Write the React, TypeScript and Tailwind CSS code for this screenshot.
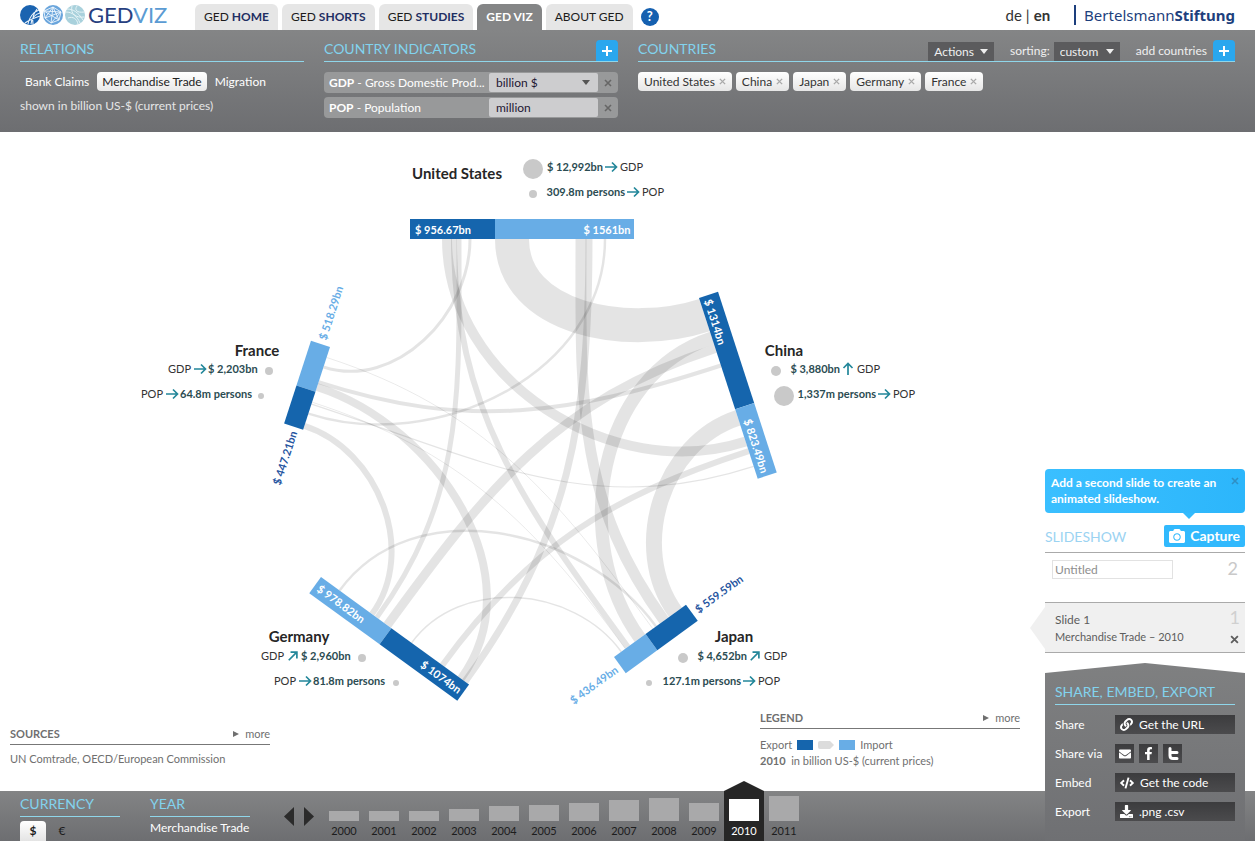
import React from "react";
import { FaCamera, FaLink, FaEnvelope, FaFacebookF, FaCode, FaDownload } from "react-icons/fa";

type Point = [number, number];

type Bar = {
  start: Point;
  angle: number;
  inward: 1 | -1;
  length: number;
  split: number;
  exportFirst: boolean;
};

const EXPORT_COLOR = "#1565ad";
const IMPORT_COLOR = "#68ade6";
const BAR_DEPTH = 20;

const bars: Record<string, Bar> = {
  us: { start: [410, 239], angle: 0, inward: 1, length: 224, split: 85, exportFirst: true },
  china: { start: [699, 298], angle: 72, inward: 1, length: 190, split: 117, exportFirst: true },
  japan: { start: [614, 657], angle: -36, inward: -1, length: 89, split: 39, exportFirst: false },
  germany: { start: [321, 577], angle: 36, inward: -1, length: 183, split: 87, exportFirst: false },
  france: { start: [330, 347], angle: 108, inward: -1, length: 87, split: 47, exportFirst: false },
};

type Flow = { from: string; at: number; to: string; end: number; width: number };

const flows: Flow[] = [
  { from: "china", at: 18, to: "us", end: 102, width: 34 },
  { from: "china", at: 42, to: "japan", end: 32, width: 13 },
  { from: "china", at: 53, to: "germany", end: 82, width: 9 },
  { from: "china", at: 71, to: "france", end: 37, width: 4 },
  { from: "us", at: 37, to: "china", end: 151, width: 10 },
  { from: "us", at: 44, to: "japan", end: 17, width: 6 },
  { from: "us", at: 49, to: "germany", end: 69, width: 5 },
  { from: "us", at: 60, to: "france", end: 21, width: 3 },
  { from: "japan", at: 76, to: "china", end: 126, width: 16 },
  { from: "japan", at: 62, to: "us", end: 171, width: 11 },
  { from: "japan", at: 52, to: "germany", end: 23, width: 2.5 },
  { from: "japan", at: 48, to: "france", end: 11, width: 0.8 },
  { from: "germany", at: 173, to: "france", end: 42, width: 8 },
  { from: "germany", at: 178, to: "us", end: 179, width: 7 },
  { from: "germany", at: 150, to: "china", end: 161, width: 6 },
  { from: "germany", at: 112, to: "japan", end: 9, width: 1.5 },
  { from: "france", at: 83, to: "germany", end: 63, width: 6 },
  { from: "france", at: 70, to: "us", end: 195, width: 2.5 },
  { from: "france", at: 60, to: "china", end: 177, width: 1.2 },
  { from: "france", at: 58, to: "japan", end: 14, width: 0.8 },
];

function anchor(bar: Bar, offset: number) {
  const a = (bar.angle * Math.PI) / 180;
  const point: Point = [bar.start[0] + Math.cos(a) * offset, bar.start[1] + Math.sin(a) * offset];
  const normal: Point = [-Math.sin(a) * bar.inward, Math.cos(a) * bar.inward];
  return { point, normal };
}

function flowPath(flow: Flow) {
  const p = anchor(bars[flow.from], flow.at);
  const q = anchor(bars[flow.to], flow.end);
  const k = 0.39 * Math.hypot(p.point[0] - q.point[0], p.point[1] - q.point[1]);
  const c1 = [p.point[0] + p.normal[0] * k, p.point[1] + p.normal[1] * k];
  const c2 = [q.point[0] + q.normal[0] * k, q.point[1] + q.normal[1] * k];
  return `M${p.point.join(" ")} C${c1.join(" ")} ${c2.join(" ")} ${q.point.join(" ")}`;
}

function BarShape({ bar }: { bar: Bar }) {
  const y = bar.inward === 1 ? -BAR_DEPTH : 0;
  const first = bar.exportFirst ? EXPORT_COLOR : IMPORT_COLOR;
  const second = bar.exportFirst ? IMPORT_COLOR : EXPORT_COLOR;
  return (
    <g transform={`translate(${bar.start[0]} ${bar.start[1]}) rotate(${bar.angle})`}>
      <rect x={0} y={y} width={bar.split} height={BAR_DEPTH} fill={first} />
      <rect x={bar.split} y={y} width={bar.length - bar.split} height={BAR_DEPTH} fill={second} />
    </g>
  );
}

const amounts = [
  { text: "$ 956.67bn", x: 443, y: 230, angle: 0, fill: "#ffffff" },
  { text: "$ 1561bn", x: 607, y: 230, angle: 0, fill: "#ffffff" },
  { text: "$ 1314bn", x: 715, y: 322, angle: 72, fill: "#ffffff" },
  { text: "$ 823.49bn", x: 756, y: 446, angle: 72, fill: "#ffffff" },
  { text: "$ 559.59bn", x: 719, y: 594, angle: -36, fill: "#2554a0" },
  { text: "$ 436.49bn", x: 594, y: 685, angle: -36, fill: IMPORT_COLOR },
  { text: "$ 978.82bn", x: 341, y: 604, angle: 36, fill: "#ffffff" },
  { text: "$ 1074bn", x: 441, y: 677, angle: 36, fill: "#ffffff" },
  { text: "$ 518.29bn", x: 331, y: 313, angle: -72, fill: IMPORT_COLOR },
  { text: "$ 447.21bn", x: 285, y: 458, angle: -72, fill: "#2554a0" },
];

const names = [
  { text: "United States", x: 457, y: 179 },
  { text: "China", x: 784, y: 356 },
  { text: "Japan", x: 734, y: 642 },
  { text: "Germany", x: 299, y: 642 },
  { text: "France", x: 257, y: 356 },
];

type Indicator = {
  value: string;
  label: string;
  arrowX: number;
  y: number;
  turn: number;
  dotX: number;
  r: number;
  mirrored?: boolean;
};

const indicators: Indicator[] = [
  { value: "$ 12,992bn", label: "GDP", arrowX: 611, y: 167, turn: 0, dotX: 533, r: 10 },
  { value: "309.8m persons", label: "POP", arrowX: 633, y: 192, turn: 0, dotX: 533, r: 4 },
  { value: "$ 3,880bn", label: "GDP", arrowX: 848, y: 369, turn: -90, dotX: 776, r: 5 },
  { value: "1,337m persons", label: "POP", arrowX: 884, y: 394, turn: 0, dotX: 784, r: 10 },
  { value: "$ 4,652bn", label: "GDP", arrowX: 755, y: 656, turn: -45, dotX: 683, r: 5 },
  { value: "127.1m persons", label: "POP", arrowX: 749, y: 681, turn: 0, dotX: 649, r: 3 },
  { value: "$ 2,960bn", label: "GDP", arrowX: 293, y: 656, turn: -45, dotX: 362, r: 4, mirrored: true },
  { value: "81.8m persons", label: "POP", arrowX: 305, y: 681, turn: 0, dotX: 396, r: 3, mirrored: true },
  { value: "$ 2,203bn", label: "GDP", arrowX: 200, y: 369, turn: 0, dotX: 269, r: 4, mirrored: true },
  { value: "64.8m persons", label: "POP", arrowX: 172, y: 394, turn: 0, dotX: 261, r: 3, mirrored: true },
];

function IndicatorMark({ item }: { item: Indicator }) {
  const side = item.mirrored ? 1 : -1;
  return (
    <g fontSize={11}>
      <circle cx={item.dotX} cy={item.y + 2} r={item.r} fill="#c9c9c9" />
      <text
        x={item.arrowX + side * 8}
        y={item.y + 4}
        textAnchor={item.mirrored ? "start" : "end"}
        fontWeight={700}
        fill="#2b4c52"
      >
        {item.value}
      </text>
      <path
        d="M-6 0H5M1 -4.500L5.500 0L1 4.500"
        transform={`translate(${item.arrowX} ${item.y}) rotate(${item.turn})`}
        fill="none"
        stroke="#23879a"
        strokeWidth={1.7}
      />
      <text
        x={item.arrowX - side * 9}
        y={item.y + 4}
        textAnchor={item.mirrored ? "end" : "start"}
        fill="#333333"
      >
        {item.label}
      </text>
    </g>
  );
}

function TradeChart() {
  return (
    <svg viewBox="0 132 1030 574" className="block h-[574px] w-full" role="img" aria-label="Merchandise Trade 2010">
      <g fill="none" stroke="#000000" strokeOpacity={0.105}>
        {flows.map((f) => (
          <path key={f.from + f.to} d={flowPath(f)} strokeWidth={f.width} />
        ))}
      </g>
      {Object.entries(bars).map(([key, bar]) => (
        <BarShape key={key} bar={bar} />
      ))}
      <g fontSize={11} fontWeight={700} textAnchor="middle">
        {amounts.map((a) => (
          <text key={a.text} transform={`translate(${a.x} ${a.y}) rotate(${a.angle})`} y={4} fill={a.fill}>
            {a.text}
          </text>
        ))}
      </g>
      <g fontSize={15} fontWeight={700} textAnchor="middle" fill="#262626">
        {names.map((n) => (
          <text key={n.text} x={n.x} y={n.y}>
            {n.text}
          </text>
        ))}
      </g>
      {indicators.map((item) => (
        <IndicatorMark key={item.value} item={item} />
      ))}
    </svg>
  );
}

function Logo() {
  return (
    <a href="#" className="flex h-[30px] w-[175px] items-center gap-0.5" aria-label="GED VIZ">
      <svg width="66" height="22" viewBox="0 0 66 22" aria-hidden="true">
        <circle cx="10" cy="11" r="10" fill="#1a63b0" />
        <path d="M8 20C9 14 13 8 19 6M11 20C11 15 15 10 20 9M5 19C9 16 14 14 20 12M13 20C12 15 14 9 17 5" fill="none" stroke="#e8f2fb" strokeWidth="1.100" />
        <circle cx="33" cy="11" r="10" fill="#6aa5dc" />
        <path d="M24 7L33 3L41 8L39 16L31 19L25 14ZM24 7L39 16M33 3L31 19M41 8L25 14M33 3L25 14M41 8L31 19M24 7L41 8M33 3L39 16" fill="none" stroke="#eef6fd" strokeWidth="0.9" />
        <circle cx="55" cy="11" r="10" fill="#a9d1dc" />
        <path d="M47 5C53 5 58 8 63 16M46 8C52 8 57 12 60 19M52 2C50 10 56 14 64 13M48 14C53 12 57 15 58 20M57 2C54 6 57 9 64 8" fill="none" stroke="#e6f4f7" strokeWidth="1" />
      </svg>
      <span className="text-[22px] leading-7 text-[#27407f]">
        GED<span className="text-[#5b9bd3]">VIZ</span>
      </span>
    </a>
  );
}

const tabs = [
  { lead: "GED", strong: "HOME" },
  { lead: "GED", strong: "SHORTS" },
  { lead: "GED", strong: "STUDIES" },
  { lead: "GED VIZ", active: true },
  { lead: "ABOUT GED" },
];

function TopBar() {
  return (
    <header className="flex h-[30px] items-end bg-white pr-5 pl-5">
      <Logo />
      <nav className="flex gap-1">
        {tabs.map((t) => (
          <a
            key={t.lead + (t.strong ?? "")}
            href="#"
            className={
              t.active
                ? "flex h-[26px] items-center gap-[3px] rounded-t-md bg-[#848586] px-[9px] text-xs font-bold text-white"
                : "flex h-[26px] items-center gap-[3px] rounded-t-md bg-[#e6e6e6] px-[9px] text-xs text-[#1c1c1c]"
            }
          >
            {t.lead}
            {t.strong && <b className="text-[#1f2f63]">{t.strong}</b>}
          </a>
        ))}
      </nav>
      <button
        type="button"
        aria-label="Help"
        className="mb-1 ml-2 flex size-[18px] items-center justify-center rounded-full bg-[#1560b0] text-[13px] font-bold text-white"
      >
        ?
      </button>
      <div className="ml-auto flex h-[30px] items-center text-[15px] text-[#333]">
        <a href="#">de</a>
        <span className="px-1">|</span>
        <a href="#" className="font-bold">en</a>
        <a href="#" className="ml-6 border-l-2 border-[#1d3f7d] pl-2 font-['Noto_Sans',sans-serif] text-[15px] leading-5 text-[#1d3f7d]">
          Bertelsmann<b>Stiftung</b>
        </a>
      </div>
    </header>
  );
}

const headingClass = "text-sm leading-6 text-[#82d3ee] whitespace-nowrap";

function AddButton({ label }: { label: string }) {
  return (
    <button
      type="button"
      aria-label={label}
      className="flex h-[21px] w-[22px] items-center justify-center rounded-t-sm bg-[#2aa7ee] text-white"
    >
      <svg width="12" height="12" viewBox="0 0 12 12" aria-hidden="true">
        <path d="M6 1V11M1 6H11" stroke="currentColor" strokeWidth="2" />
      </svg>
    </button>
  );
}

function Cross({ size }: { size: number }) {
  return (
    <svg width={size} height={size} viewBox="0 0 8 8" aria-hidden="true">
      <path d="M1 1L7 7M7 1L1 7" stroke="currentColor" strokeWidth="1.600" />
    </svg>
  );
}

function Caret() {
  return (
    <svg width="8" height="5" viewBox="0 0 8 5" className="pointer-events-none" aria-hidden="true">
      <path d="M0 0H8L4 5Z" fill="currentColor" />
    </svg>
  );
}

const countryTags = ["United States", "China", "Japan", "Germany", "France"];

function ControlPanel() {
  return (
    <section className="grid min-h-[102px] grid-cols-[284px_294px_minmax(0,1fr)] gap-x-5 bg-linear-to-b from-[#848586] to-[#6d6e71] px-5 pt-2">
      <div>
        <div className="flex h-6 items-end border-b border-[#8fd6ea]">
          <h2 className={headingClass}>RELATIONS</h2>
        </div>
        <div className="mt-2.5 flex text-xs leading-[19px] text-white">
          <button type="button" className="px-[5px]">Bank Claims</button>
          <button type="button" className="mx-[3px] rounded-sm bg-linear-to-b from-white to-[#e9e9e9] px-[5px] text-[#222]">
            Merchandise Trade
          </button>
          <button type="button" className="px-[5px]">Migration</button>
        </div>
        <p className="mt-[5px] text-xs leading-5 text-[#e6e6e6]">shown in billion US-$ (current prices)</p>
      </div>

      <div>
        <div className="flex h-6 items-end justify-between border-b border-[#8fd6ea]">
          <h2 className={headingClass}>COUNTRY INDICATORS</h2>
          <AddButton label="Add indicator" />
        </div>
        <div className="mt-2.5 flex h-[21px] items-center rounded-sm bg-[#98999a] pl-[5px] text-xs whitespace-nowrap text-white">
          <label htmlFor="gdp-unit" className="flex-1">
            <b>GDP</b> - Gross Domestic Prod...
          </label>
          <span className="relative flex h-[19px] w-[109px] items-center">
            <select id="gdp-unit" className="h-[19px] w-full appearance-none rounded-xs bg-[#cdcdcf] px-[7px] text-xs leading-[19px] text-[#1d1733]">
              <option>billion $</option>
            </select>
            <span className="pointer-events-none absolute right-2 text-[#555]">
              <Caret />
            </span>
          </span>
          <button type="button" aria-label="Remove GDP" className="flex w-5 justify-center text-[#666]">
            <Cross size={8} />
          </button>
        </div>
        <div className="mt-1 flex h-[21px] items-center rounded-sm bg-[#98999a] pl-[5px] text-xs whitespace-nowrap text-white">
          <label htmlFor="pop-unit" className="flex-1">
            <b>POP</b> - Population
          </label>
          <input id="pop-unit" readOnly value="million" className="h-[19px] w-[109px] rounded-xs bg-[#cdcdcf] px-[7px] text-xs text-[#1d1733]" />
          <button type="button" aria-label="Remove POP" className="flex w-5 justify-center text-[#666]">
            <Cross size={8} />
          </button>
        </div>
      </div>

      <div>
        <div className="flex h-6 items-end border-b border-[#8fd6ea] text-xs text-[#efefef]">
          <h2 className={headingClass}>COUNTRIES</h2>
          <button type="button" className="ml-auto flex h-[19px] items-center gap-1.5 bg-[#5b5b5d] px-1.5">
            Actions <Caret />
          </button>
          <label htmlFor="sorting" className="ml-4 leading-5">sorting:</label>
          <span className="relative ml-1 flex h-[19px] w-[66px] items-center bg-[#5b5b5d]">
            <select id="sorting" className="h-[19px] w-full appearance-none px-1.5 text-xs leading-[19px]">
              <option>custom</option>
            </select>
            <span className="pointer-events-none absolute right-1.5">
              <Caret />
            </span>
          </span>
          <span className="mr-1.5 ml-4 leading-5">add countries</span>
          <AddButton label="Add countries" />
        </div>
        <ul className="mt-2.5 flex gap-1 text-xs leading-[19px] text-[#333]">
          {countryTags.map((c) => (
            <li key={c} className="flex items-center gap-1 rounded-sm bg-linear-to-b from-white to-[#e6e6e6] px-1.5">
              {c}
              <button type="button" aria-label={`Remove ${c}`} className="text-[#aaa]">
                <Cross size={7} />
              </button>
            </li>
          ))}
        </ul>
      </div>
    </section>
  );
}

function MoreLink() {
  return (
    <a href="#" className="flex items-center gap-1.5 text-[11px]">
      <svg width="6" height="6" viewBox="0 0 6 6" aria-hidden="true">
        <path d="M0 0L6 3L0 6Z" fill="currentColor" />
      </svg>
      more
    </a>
  );
}

function Notes() {
  return (
    <div className="flex items-start justify-between px-2.5 text-[11px] text-[#6f6f6f]">
      <section className="w-[260px] pt-4">
        <div className="flex items-center justify-between border-b border-[#777] leading-5">
          <h3 className="text-[11px] font-bold">SOURCES</h3>
          <MoreLink />
        </div>
        <p className="mt-1 leading-5">UN Comtrade, OECD/European Commission</p>
      </section>
      <section className="w-[260px] pb-[22px]">
        <div className="flex items-center justify-between border-b border-[#777] leading-5">
          <h3 className="text-[11px] font-bold">LEGEND</h3>
          <MoreLink />
        </div>
        <div className="mt-2 flex items-center gap-[5px] leading-4">
          Export
          <span className="h-2.5 w-4 bg-[#1565ad]" />
          <svg width="16" height="8" viewBox="0 0 16 8" aria-hidden="true">
            <path d="M0 2Q0 0 2 0H12L16 4L12 8H2Q0 8 0 6Z" fill="#dcdcdc" />
          </svg>
          <span className="h-2.5 w-4 bg-[#68ade6]" />
          Import
        </div>
        <p className="leading-4">
          <b>2010</b>&nbsp; in billion US-$ (current prices)
        </p>
      </section>
    </div>
  );
}

function TwitterT() {
  return (
    <svg width="12" height="14" viewBox="0 0 12 14" aria-hidden="true">
      <path d="M3 1.500V8.500Q3 11.500 6 11.500H10M3 5.500H10" fill="none" stroke="currentColor" strokeWidth="3" strokeLinecap="round" />
    </svg>
  );
}

const darkButton = "flex h-[19px] w-full items-center gap-1.5 bg-linear-to-b from-[#3c3c3e] to-[#4b4b4d] px-[5px] text-xs text-white";
const squareButton = "flex h-[19px] w-[19px] items-center justify-center bg-linear-to-b from-[#3c3c3e] to-[#4b4b4d] text-white";

function Sidebar() {
  return (
    <aside className="z-10 col-start-2 row-span-2 row-start-1 flex flex-col self-end pr-2.5 pl-[15px]">
      <div className="relative flex h-11 items-start justify-between rounded-sm bg-linear-to-r from-[#3abfff] to-[#2cb6fb] px-1.5 pt-1.5 text-xs leading-4 text-white">
        <p className="font-bold whitespace-nowrap">
          Add a second slide to create an
          <br />
          animated slideshow.
        </p>
        <button type="button" aria-label="Dismiss hint" className="mt-0.5 text-[#2f8fc4]">
          <Cross size={8} />
        </button>
        <svg className="absolute top-11 right-[50px]" width="12" height="6" viewBox="0 0 12 6" aria-hidden="true">
          <path d="M0 0H12L6 6Z" fill="#33bbfd" />
        </svg>
      </div>
      <div className="mt-3 flex h-7 items-start justify-between border-b border-[#aaa]">
        <h2 className="text-sm leading-6 text-[#9bd3f2]">SLIDESHOW</h2>
        <button type="button" className="flex h-[22px] items-center gap-[5px] rounded-xs bg-[#31b9fd] px-[5px] text-sm font-bold text-white">
          <FaCamera size={16} />
          Capture
        </button>
      </div>
      <div className="flex h-[49px] items-start justify-between px-[7px] pt-[7px]">
        <input
          aria-label="Slide title"
          placeholder="Untitled"
          className="h-[19px] w-[121px] border border-[#e2e2e2] px-0.5 text-xs placeholder:text-[#8e8e8e]"
        />
        <span className="text-lg leading-4 text-[#c9c9c9]">2</span>
      </div>
      <div className="relative flex h-[51px] justify-between border-y border-[#aaa] bg-[#f0f0f0] px-2.5 text-[#5d5d5d]">
        <svg className="absolute top-0 -left-[15px]" width="15" height="49" viewBox="0 0 15 49" aria-hidden="true">
          <path d="M15 4L0 25L15 46Z" fill="#f0f0f0" />
        </svg>
        <div className="pt-2">
          <p className="text-xs leading-[18px]">Slide 1</p>
          <p className="text-[11px] leading-4">Merchandise Trade – 2010</p>
        </div>
        <div className="-mr-[5px] flex flex-col items-center pt-1">
          <span className="text-lg leading-5 text-[#d0d0d0]">1</span>
          <button type="button" aria-label="Remove slide 1" className="mt-2">
            <Cross size={9} />
          </button>
        </div>
      </div>
      <section className="mt-2.5 flex h-[178px] flex-col bg-linear-to-b from-[#7f8081] to-[#6f7073] px-2.5 pt-[17px] text-white [clip-path:polygon(0_10px,50%_0,100%_10px,100%_100%,0_100%)]">
        <h2 className="mb-2.5 border-b border-[#8fd6ea] text-sm leading-6 text-[#82d3ee]">SHARE, EMBED, EXPORT</h2>
        <div className="grid grid-cols-[60px_minmax(0,1fr)] items-center gap-y-2.5 text-xs leading-[19px]">
          <span>Share</span>
          <button type="button" className={darkButton}>
            <FaLink size={13} /> Get the URL
          </button>
          <span>Share via</span>
          <div className="flex gap-[5px]">
            <button type="button" aria-label="E-mail" className={squareButton}>
              <FaEnvelope size={12} />
            </button>
            <button type="button" aria-label="Facebook" className={squareButton}>
              <FaFacebookF size={13} />
            </button>
            <button type="button" aria-label="Twitter" className={squareButton}>
              <TwitterT />
            </button>
          </div>
          <span>Embed</span>
          <button type="button" className={darkButton}>
            <FaCode size={14} /> Get the code
          </button>
          <span>Export</span>
          <button type="button" className={darkButton}>
            <FaDownload size={13} /> .png .csv
          </button>
        </div>
      </section>
    </aside>
  );
}

const years = [
  { year: 2000, volume: 10 },
  { year: 2001, volume: 10 },
  { year: 2002, volume: 10 },
  { year: 2003, volume: 12 },
  { year: 2004, volume: 15 },
  { year: 2005, volume: 16 },
  { year: 2006, volume: 18 },
  { year: 2007, volume: 21 },
  { year: 2008, volume: 23 },
  { year: 2009, volume: 18 },
  { year: 2010, volume: 22 },
  { year: 2011, volume: 25 },
];

function Timeline() {
  return (
    <footer className="col-span-2 col-start-1 row-start-2 flex h-[50px] bg-linear-to-b from-[#838485] to-[#6d6e71] pl-5">
      <div className="w-[100px]">
        <h2 className="border-b border-[#8fd6ea] pt-px text-sm leading-6 text-[#82d3ee]">CURRENCY</h2>
        <div className="mt-1 flex text-xs leading-5 text-[#1c1c1c]">
          <button type="button" className="w-[26px] rounded-t-sm bg-linear-to-b from-white to-[#e4e4e4] font-bold">$</button>
          <button type="button" className="w-8">€</button>
        </div>
      </div>
      <div className="ml-[30px] w-[100px]">
        <h2 className="border-b border-[#8fd6ea] pt-px text-sm leading-6 text-[#82d3ee]">YEAR</h2>
        <p className="text-xs leading-[22px] whitespace-nowrap text-white">Merchandise Trade</p>
      </div>
      <div className="ml-[34px] flex items-center gap-2.5 text-[#2b2b2b]">
        <button type="button" aria-label="Previous year">
          <svg width="10" height="19" viewBox="0 0 10 19"><path d="M10 0V19L0 9.500Z" fill="currentColor" /></svg>
        </button>
        <button type="button" aria-label="Next year">
          <svg width="10" height="19" viewBox="0 0 10 19"><path d="M0 0V19L10 9.500Z" fill="currentColor" /></svg>
        </button>
      </div>
      <div className="-mt-2.5 ml-2.5 flex">
        {years.map(({ year, volume }) => (
          <button
            key={year}
            type="button"
            className={
              year === 2010
                ? "flex w-10 flex-col items-center justify-end bg-[#262626] text-[11px] leading-5 text-white [clip-path:polygon(0_10px,50%_0,100%_10px,100%_100%,0_100%)]"
                : "flex w-10 flex-col items-center justify-end text-[11px] leading-5 text-[#1c1c1c]"
            }
          >
            <span className={year === 2010 ? "w-[30px] bg-white" : "w-[30px] bg-[#a9a9aa]"} style={{ height: volume }} />
            {year}
          </button>
        ))}
      </div>
    </footer>
  );
}

export default function App() {
  return (
    <div className="flex min-h-screen flex-col bg-white font-['Lato',sans-serif]">
      <TopBar />
      <ControlPanel />
      <div className="grid flex-1 grid-cols-[minmax(0,1fr)_225px] grid-rows-[1fr_50px]">
        <main className="col-start-1 row-start-1 flex flex-col justify-between">
          <TradeChart />
          <Notes />
        </main>
        <Timeline />
        <Sidebar />
      </div>
    </div>
  );
}
